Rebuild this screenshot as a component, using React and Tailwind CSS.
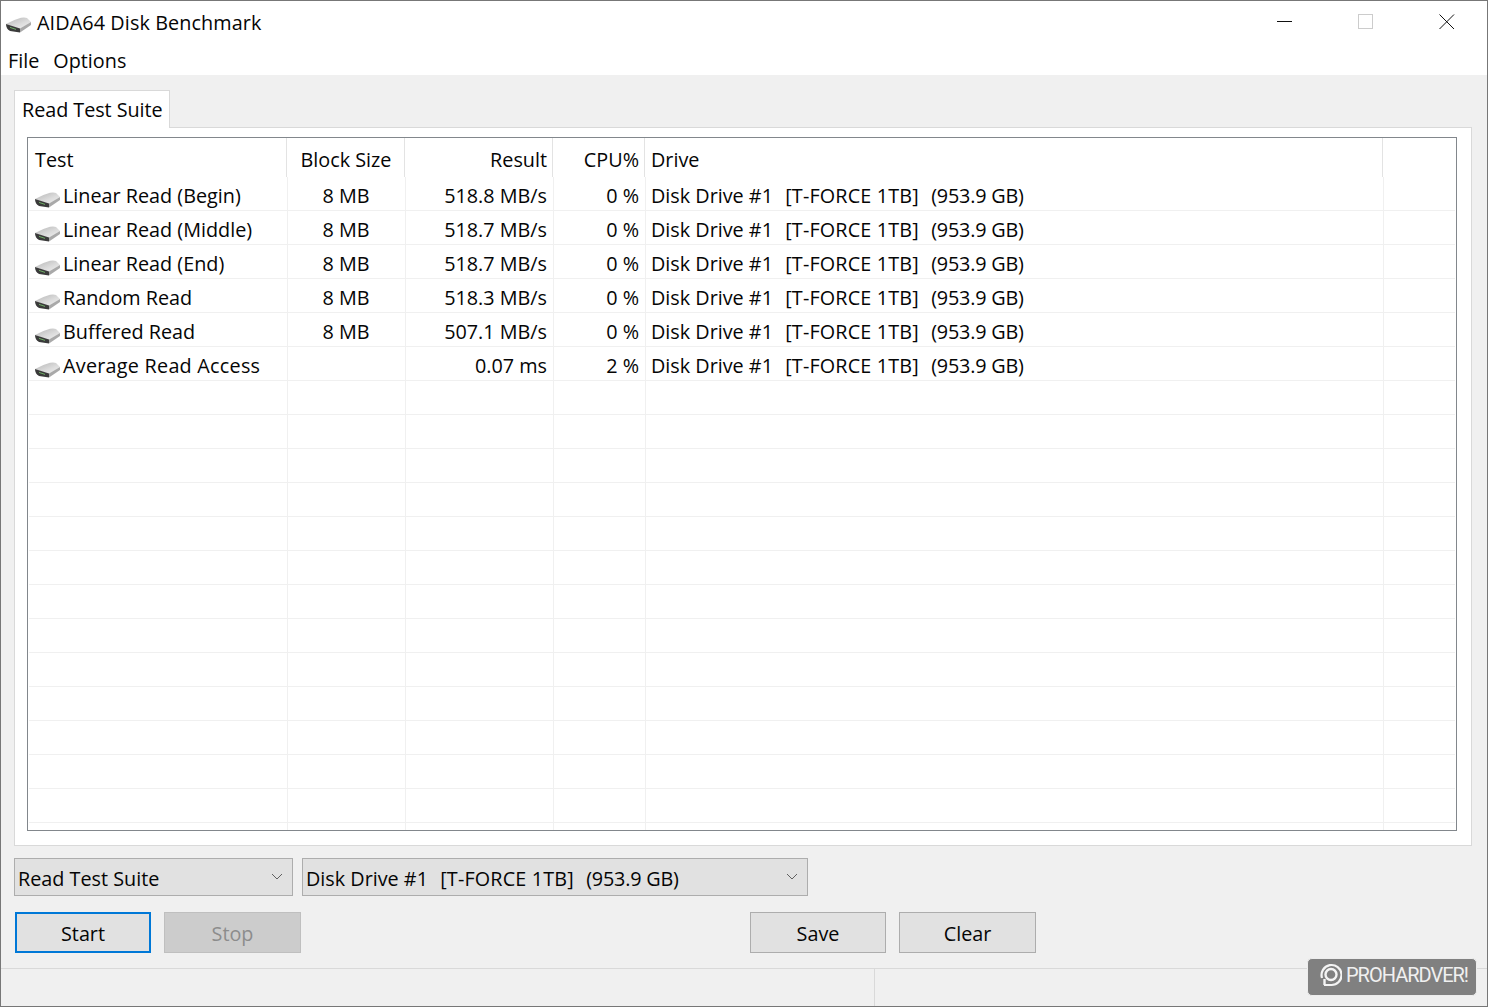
const font = "font-['Open_Sans','Noto_Sans',sans-serif]";

function Drive({ className = "" }) {
  return (
    <svg width="27" height="16" viewBox="0 0 27 16" className={`shrink-0 ${className}`}>
      <defs>
        <linearGradient id="dtop" x1="0" y1="0" x2="0.9" y2="1">
          <stop offset="0" stopColor="#b4b4b4" />
          <stop offset="0.6" stopColor="#dcdcdc" />
          <stop offset="1" stopColor="#f0f0f0" />
        </linearGradient>
      </defs>
      <path d="M1 7 Q9 2.5 16 0.7 Q20 0 22 1 L26 5 L15 12 L1 7 Z" fill="url(#dtop)" />
      <path d="M1 7 L15 11.5 L15 15.5 L5 14 Q1 12 1 7 Z" fill="#3a3a3a" />
      <path d="M15 11.5 L26 5 L26 8 L15 15.5 Z" fill="#a9a9a9" />
      <path d="M5 10.4 L11 12.4" stroke="#6fae66" strokeWidth="1" />
    </svg>
  );
}

const rows = [
  ["Linear Read (Begin)", "8 MB", "518.8 MB/s", "0 %"],
  ["Linear Read (Middle)", "8 MB", "518.7 MB/s", "0 %"],
  ["Linear Read (End)", "8 MB", "518.7 MB/s", "0 %"],
  ["Random Read", "8 MB", "518.3 MB/s", "0 %"],
  ["Buffered Read", "8 MB", "507.1 MB/s", "0 %"],
  ["Average Read Access", "", "0.07 ms", "2 %"],
];
const empty = Array.from({ length: 14 });

function DriveName() {
  return (
    <span className="whitespace-pre">
      Disk Drive #1{"  "}
      <span className="ml-[2px] tracking-[0.16px]">[T-FORCE 1TB]</span>
      {"  "}
      <span className="ml-[2px] tracking-[-0.2px]">(953.9 GB)</span>
    </span>
  );
}

function Row({ data }) {
  const sep = "border-r border-[#f0f0f0] h-full shrink-0 flex items-center pt-[5px]";
  return (
    <div className="flex h-[34px] border-b border-[#f0f0f0] ml-[1px] mr-[1px] overflow-hidden">
      <div className={`${sep} w-[259px] pl-[5px]`}>
        {data && <Drive className="mt-[7px] mr-[2px]" />}
        {data && <span className={data[0].startsWith("Average") ? "tracking-[0.25px]" : ""}>{data[0]}</span>}
      </div>
      <div className={`${sep} w-[118px] justify-center pr-[1px]`}>{data && data[1]}</div>
      <div className={`${sep} w-[148px] justify-end pr-[6px]`}>{data && data[2]}</div>
      <div className={`${sep} w-[92px] justify-end pr-[6px]`}>{data && data[3]}</div>
      <div className={`${sep} w-[738px] pl-[5px]`}>{data && <DriveName />}</div>
      <div className="flex-1" />
    </div>
  );
}

function Header() {
  const sep = "border-r border-[#e3e3e3] h-full shrink-0 flex items-center pt-[5px]";
  return (
    <div className="flex h-[39px] ml-[1px] mr-[1px]">
      <div className={`${sep} w-[258px] pl-[6px]`}>Test</div>
      <div className={`${sep} w-[118px] justify-center pl-[1px]`}>Block Size</div>
      <div className={`${sep} w-[148px] justify-end pr-[5px]`}>Result</div>
      <div className={`${sep} w-[92px] justify-end pr-[5px]`}>CPU%</div>
      <div className={`${sep} w-[738px] pl-[6px]`}>Drive</div>
      <div className="flex-1" />
    </div>
  );
}

function Combo({ w, children }) {
  return (
    <div className={`${w} h-[38px] bg-[#e1e1e1] border border-[#adadad] flex items-center pl-[3px] pr-[8px] justify-between`}>
      <span className="pt-[3px]">{children}</span>
      <svg width="12" height="8" viewBox="0 0 12 8" className="mr-[1px]">
        <path d="M1 1 L6 6 L11 1" fill="none" stroke="#606060" strokeWidth="1" />
      </svg>
    </div>
  );
}

function Btn({ w, cls = "bg-[#e1e1e1] border border-[#adadad]", children }) {
  return (
    <div className={`${w} h-[41px] flex items-center justify-center shrink-0 pt-[3px] ${cls}`}>{children}</div>
  );
}

export default function App() {
  return (
    <div className={`w-[1488px] h-[1007px] relative flex flex-col overflow-hidden bg-[#f0f0f0] border border-[#777777] text-[19.8px] text-[#050505] ${font}`}>
      <div className="h-[41px] bg-white flex items-center shrink-0">
        <Drive className="ml-[4px] mt-[7px]" />
        <span className="ml-[5px] mt-[3px] tracking-[0.1px]">AIDA64 Disk Benchmark</span>
        <div className="ml-auto flex items-center h-full">
          <svg width="16" height="16" viewBox="0 0 16 16" className="mr-[65px] mt-[1px]"><path d="M0 7.5 H15" stroke="#111" strokeWidth="1" /></svg>
          <svg width="16" height="16" viewBox="0 0 16 16" className="mr-[65px] mt-[1px]"><rect x="0.5" y="0.5" width="14" height="14" fill="none" stroke="#cccccc" /></svg>
          <svg width="16" height="16" viewBox="0 0 16 16" className="mr-[32px] mt-[1px]"><path d="M0.5 0.5 L15 15 M15 0.5 L0.5 15" stroke="#111" strokeWidth="1" /></svg>
        </div>
      </div>
      <div className="h-[33px] bg-white flex items-center shrink-0 pl-[7px] gap-[14px] pt-[5px]">
        <span>File</span>
        <span>Options</span>
      </div>

      <div className="flex-1 flex flex-col px-[13px] pt-[15px]">
        <div className="relative z-10 w-[156px] h-[38px] -mb-[1px] bg-white border border-b-0 border-[#d9d9d9] flex items-center pl-[7px] tracking-[-0.05px]">
          Read Test Suite
        </div>
        <div className="h-[719px] w-[1458px] bg-white border border-[#d9d9d9] pt-[9px] pl-[12px]">
          <div className="w-[1430px] h-[694px] border border-[#82878c] overflow-hidden">
            <Header />
            {rows.map((r) => (
              <Row key={r[0]} data={r} />
            ))}
            {empty.map((_, i) => (
              <Row key={i} />
            ))}
          </div>
        </div>

        <div className="flex gap-[9px] mt-[12px]">
          <Combo w="w-[279px]">Read Test Suite</Combo>
          <Combo w="w-[506px]"><DriveName /></Combo>
        </div>
        <div className="flex mt-[16px] pl-[1px]">
          <Btn w="w-[136px]" cls="bg-[#e1e1e1] border-2 border-[#0078d7]">Start</Btn>
          <Btn w="w-[137px] ml-[13px]" cls="bg-[#cccccc] border border-[#bfbfbf] text-[#8c8c8c]">Stop</Btn>
          <Btn w="w-[136px] ml-[449px]">Save</Btn>
          <Btn w="w-[137px] ml-[13px]">Clear</Btn>
        </div>
      </div>

      <div className="h-[38px] shrink-0 border-t border-[#d9d9d9] flex">
        <div className="w-[874px] h-full border-r border-[#d9d9d9]" />
      </div>

      <div className="absolute left-[1306px] top-[957px] w-[170px] h-[38px] rounded-[5px] bg-[#808080] border border-[#ededed] flex items-center pl-[10px] pb-[4px] text-[#f0f0f0]">
        <svg width="24" height="24" viewBox="0 0 24 24" className="shrink-0">
          <path d="M4 15 A10 10 0 1 1 13 22 H6" fill="none" stroke="#f4f4f4" strokeWidth="2.2" />
          <circle cx="13" cy="11.5" r="5.5" fill="none" stroke="#f4f4f4" strokeWidth="2.4" />
          <path d="M6.5 16 V22" stroke="#f4f4f4" strokeWidth="2.4" />
        </svg>
        <span className="ml-[4px] font-['Roboto',sans-serif] text-[20px] tracking-[-1px] leading-none">PROHARDVER!</span>
      </div>
    </div>
  );
}
